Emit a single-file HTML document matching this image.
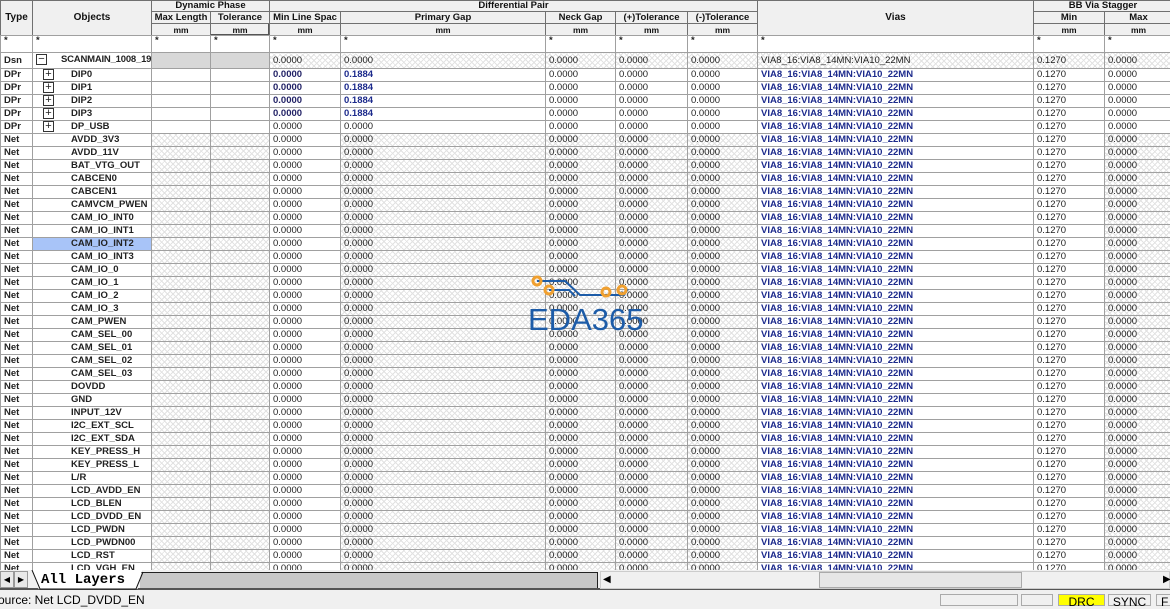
<!DOCTYPE html>
<html><head><meta charset="utf-8"><style>
*{margin:0;padding:0;box-sizing:border-box}
body{width:1170px;height:606px;overflow:hidden;background:#f0f0f0;font-family:"Liberation Sans",Arial,sans-serif;position:relative}
table{border-collapse:collapse;table-layout:fixed;position:absolute;left:0}
td{border:1px solid #a0a0a0;font-size:9.5px;white-space:nowrap;overflow:hidden;padding:0 0 0 3px;line-height:12px;height:13px;color:#222}
.hc{position:absolute;border:1px solid #707070;background:#f0f0f0;font-weight:bold;text-align:center;font-size:9.5px;color:#111;overflow:hidden;white-space:nowrap}
.mm{font-size:8.5px;line-height:12px}
#bd td{background:#fff}
tr.s td{height:17px;line-height:10px;vertical-align:top;font-weight:bold}
tr.d td{height:16px}
tr.d td:nth-child(3),tr.d td:nth-child(4){background:#d8d8d8!important}
tr.d td:nth-child(n+5),tr.n td:nth-child(3),tr.n td:nth-child(4),tr.n td:nth-child(6),tr.n td:nth-child(7),tr.n td:nth-child(8),tr.n td:nth-child(9),tr.n td:nth-child(12){background:repeating-linear-gradient(45deg,#e2e2e2 0 1px,transparent 1px 4px),repeating-linear-gradient(-45deg,#e2e2e2 0 1px,#fff 1px 4px)!important}
td:nth-child(1){font-weight:bold}
td:nth-child(2){font-weight:bold;padding-left:38px}
tr.d td:nth-child(2){padding-left:3px;letter-spacing:-0.2px}
tr.p td:nth-child(2){padding-left:10px}
tr.p td:nth-child(5){color:#222266;font-weight:bold}
tr.p td:nth-child(6),tr.p td:nth-child(10),tr.n td:nth-child(10){color:#1c2a8c;font-weight:bold}
.bx{display:inline-block;width:11px;height:11px;border:1px solid #333;vertical-align:middle;text-align:center;line-height:8px;font-size:11px;font-weight:normal;margin-right:17px;letter-spacing:0}
tr.d .bx{margin-right:14px}
.sel{background:#a8c4f8!important}
</style></head><body>
<div class="hc" style="left:0;top:0;width:33px;height:36px;line-height:33px;font-size:10px">Type</div>
<div class="hc" style="left:32px;top:0;width:120px;height:36px;line-height:33px;font-size:10px">Objects</div>
<div class="hc" style="left:151px;top:0;width:119px;height:12px;line-height:9px">Dynamic Phase</div>
<div class="hc" style="left:269px;top:0;width:489px;height:12px;line-height:9px">Differential Pair</div>
<div class="hc" style="left:757px;top:0;width:277px;height:36px;line-height:33px;font-size:10px">Vias</div>
<div class="hc" style="left:1033px;top:0;width:140px;height:12px;line-height:9px">BB Via Stagger</div>
<div class="hc" style="left:151px;top:11px;width:60px;height:13px;line-height:11px">Max Length</div>
<div class="hc" style="left:210px;top:11px;width:60px;height:13px;line-height:11px">Tolerance</div>
<div class="hc" style="left:269px;top:11px;width:72px;height:13px;line-height:11px">Min Line Spac</div>
<div class="hc" style="left:340px;top:11px;width:206px;height:13px;line-height:11px">Primary Gap</div>
<div class="hc" style="left:545px;top:11px;width:71px;height:13px;line-height:11px">Neck Gap</div>
<div class="hc" style="left:615px;top:11px;width:73px;height:13px;line-height:11px">(+)Tolerance</div>
<div class="hc" style="left:687px;top:11px;width:71px;height:13px;line-height:11px">(-)Tolerance</div>
<div class="hc" style="left:1033px;top:11px;width:72px;height:13px;line-height:11px">Min</div>
<div class="hc" style="left:1104px;top:11px;width:69px;height:13px;line-height:11px">Max</div>
<div class="hc mm" style="left:151px;top:23px;width:60px;height:13px">mm</div>
<div class="hc mm" style="left:210px;top:23px;width:60px;height:13px;box-shadow:inset -1px -1px #555">mm</div>
<div class="hc mm" style="left:269px;top:23px;width:72px;height:13px">mm</div>
<div class="hc mm" style="left:340px;top:23px;width:206px;height:13px">mm</div>
<div class="hc mm" style="left:545px;top:23px;width:71px;height:13px">mm</div>
<div class="hc mm" style="left:615px;top:23px;width:73px;height:13px">mm</div>
<div class="hc mm" style="left:687px;top:23px;width:71px;height:13px">mm</div>
<div class="hc mm" style="left:1033px;top:23px;width:72px;height:13px">mm</div>
<div class="hc mm" style="left:1104px;top:23px;width:69px;height:13px">mm</div>
<div style="position:absolute;top:35px;left:0;width:1170px;height:535px;overflow:hidden">
<table id="bd" style="width:1170px;top:0">
<colgroup><col style="width:32px"><col style="width:119px"><col style="width:59px"><col style="width:59px"><col style="width:71px"><col style="width:205px"><col style="width:70px"><col style="width:72px"><col style="width:70px"><col style="width:276px"><col style="width:71px"><col style="width:66px"></colgroup>
<tr class="s"><td>*</td><td style="padding-left:3px">*</td><td>*</td><td>*</td><td>*</td><td>*</td><td>*</td><td>*</td><td>*</td><td>*</td><td>*</td><td>*</td></tr>
<tr class="d"><td>Dsn</td><td><span class="bx">−</span>SCANMAIN_1008_19</td><td></td><td></td><td>0.0000</td><td>0.0000</td><td>0.0000</td><td>0.0000</td><td>0.0000</td><td>VIA8_16:VIA8_14MN:VIA10_22MN</td><td>0.1270</td><td>0.0000</td></tr>
<tr class="p"><td>DPr</td><td><span class="bx">+</span>DIP0</td><td></td><td></td><td>0.0000</td><td>0.1884</td><td>0.0000</td><td>0.0000</td><td>0.0000</td><td>VIA8_16:VIA8_14MN:VIA10_22MN</td><td>0.1270</td><td>0.0000</td></tr>
<tr class="p"><td>DPr</td><td><span class="bx">+</span>DIP1</td><td></td><td></td><td>0.0000</td><td>0.1884</td><td>0.0000</td><td>0.0000</td><td>0.0000</td><td>VIA8_16:VIA8_14MN:VIA10_22MN</td><td>0.1270</td><td>0.0000</td></tr>
<tr class="p"><td>DPr</td><td><span class="bx">+</span>DIP2</td><td></td><td></td><td>0.0000</td><td>0.1884</td><td>0.0000</td><td>0.0000</td><td>0.0000</td><td>VIA8_16:VIA8_14MN:VIA10_22MN</td><td>0.1270</td><td>0.0000</td></tr>
<tr class="p"><td>DPr</td><td><span class="bx">+</span>DIP3</td><td></td><td></td><td>0.0000</td><td>0.1884</td><td>0.0000</td><td>0.0000</td><td>0.0000</td><td>VIA8_16:VIA8_14MN:VIA10_22MN</td><td>0.1270</td><td>0.0000</td></tr>
<tr class="p"><td>DPr</td><td><span class="bx">+</span>DP_USB</td><td></td><td></td><td style="color:#222;font-weight:normal">0.0000</td><td style="color:#222;font-weight:normal">0.0000</td><td>0.0000</td><td>0.0000</td><td>0.0000</td><td>VIA8_16:VIA8_14MN:VIA10_22MN</td><td>0.1270</td><td>0.0000</td></tr>
<tr class="n"><td>Net</td><td>AVDD_3V3</td><td></td><td></td><td>0.0000</td><td>0.0000</td><td>0.0000</td><td>0.0000</td><td>0.0000</td><td>VIA8_16:VIA8_14MN:VIA10_22MN</td><td>0.1270</td><td>0.0000</td></tr>
<tr class="n"><td>Net</td><td>AVDD_11V</td><td></td><td></td><td>0.0000</td><td>0.0000</td><td>0.0000</td><td>0.0000</td><td>0.0000</td><td>VIA8_16:VIA8_14MN:VIA10_22MN</td><td>0.1270</td><td>0.0000</td></tr>
<tr class="n"><td>Net</td><td>BAT_VTG_OUT</td><td></td><td></td><td>0.0000</td><td>0.0000</td><td>0.0000</td><td>0.0000</td><td>0.0000</td><td>VIA8_16:VIA8_14MN:VIA10_22MN</td><td>0.1270</td><td>0.0000</td></tr>
<tr class="n"><td>Net</td><td>CABCEN0</td><td></td><td></td><td>0.0000</td><td>0.0000</td><td>0.0000</td><td>0.0000</td><td>0.0000</td><td>VIA8_16:VIA8_14MN:VIA10_22MN</td><td>0.1270</td><td>0.0000</td></tr>
<tr class="n"><td>Net</td><td>CABCEN1</td><td></td><td></td><td>0.0000</td><td>0.0000</td><td>0.0000</td><td>0.0000</td><td>0.0000</td><td>VIA8_16:VIA8_14MN:VIA10_22MN</td><td>0.1270</td><td>0.0000</td></tr>
<tr class="n"><td>Net</td><td>CAMVCM_PWEN</td><td></td><td></td><td>0.0000</td><td>0.0000</td><td>0.0000</td><td>0.0000</td><td>0.0000</td><td>VIA8_16:VIA8_14MN:VIA10_22MN</td><td>0.1270</td><td>0.0000</td></tr>
<tr class="n"><td>Net</td><td>CAM_IO_INT0</td><td></td><td></td><td>0.0000</td><td>0.0000</td><td>0.0000</td><td>0.0000</td><td>0.0000</td><td>VIA8_16:VIA8_14MN:VIA10_22MN</td><td>0.1270</td><td>0.0000</td></tr>
<tr class="n"><td>Net</td><td>CAM_IO_INT1</td><td></td><td></td><td>0.0000</td><td>0.0000</td><td>0.0000</td><td>0.0000</td><td>0.0000</td><td>VIA8_16:VIA8_14MN:VIA10_22MN</td><td>0.1270</td><td>0.0000</td></tr>
<tr class="n"><td>Net</td><td class="sel">CAM_IO_INT2</td><td></td><td></td><td>0.0000</td><td>0.0000</td><td>0.0000</td><td>0.0000</td><td>0.0000</td><td>VIA8_16:VIA8_14MN:VIA10_22MN</td><td>0.1270</td><td>0.0000</td></tr>
<tr class="n"><td>Net</td><td>CAM_IO_INT3</td><td></td><td></td><td>0.0000</td><td>0.0000</td><td>0.0000</td><td>0.0000</td><td>0.0000</td><td>VIA8_16:VIA8_14MN:VIA10_22MN</td><td>0.1270</td><td>0.0000</td></tr>
<tr class="n"><td>Net</td><td>CAM_IO_0</td><td></td><td></td><td>0.0000</td><td>0.0000</td><td>0.0000</td><td>0.0000</td><td>0.0000</td><td>VIA8_16:VIA8_14MN:VIA10_22MN</td><td>0.1270</td><td>0.0000</td></tr>
<tr class="n"><td>Net</td><td>CAM_IO_1</td><td></td><td></td><td>0.0000</td><td>0.0000</td><td>0.0000</td><td>0.0000</td><td>0.0000</td><td>VIA8_16:VIA8_14MN:VIA10_22MN</td><td>0.1270</td><td>0.0000</td></tr>
<tr class="n"><td>Net</td><td>CAM_IO_2</td><td></td><td></td><td>0.0000</td><td>0.0000</td><td>0.0000</td><td>0.0000</td><td>0.0000</td><td>VIA8_16:VIA8_14MN:VIA10_22MN</td><td>0.1270</td><td>0.0000</td></tr>
<tr class="n"><td>Net</td><td>CAM_IO_3</td><td></td><td></td><td>0.0000</td><td>0.0000</td><td>0.0000</td><td>0.0000</td><td>0.0000</td><td>VIA8_16:VIA8_14MN:VIA10_22MN</td><td>0.1270</td><td>0.0000</td></tr>
<tr class="n"><td>Net</td><td>CAM_PWEN</td><td></td><td></td><td>0.0000</td><td>0.0000</td><td>0.0000</td><td>0.0000</td><td>0.0000</td><td>VIA8_16:VIA8_14MN:VIA10_22MN</td><td>0.1270</td><td>0.0000</td></tr>
<tr class="n"><td>Net</td><td>CAM_SEL_00</td><td></td><td></td><td>0.0000</td><td>0.0000</td><td>0.0000</td><td>0.0000</td><td>0.0000</td><td>VIA8_16:VIA8_14MN:VIA10_22MN</td><td>0.1270</td><td>0.0000</td></tr>
<tr class="n"><td>Net</td><td>CAM_SEL_01</td><td></td><td></td><td>0.0000</td><td>0.0000</td><td>0.0000</td><td>0.0000</td><td>0.0000</td><td>VIA8_16:VIA8_14MN:VIA10_22MN</td><td>0.1270</td><td>0.0000</td></tr>
<tr class="n"><td>Net</td><td>CAM_SEL_02</td><td></td><td></td><td>0.0000</td><td>0.0000</td><td>0.0000</td><td>0.0000</td><td>0.0000</td><td>VIA8_16:VIA8_14MN:VIA10_22MN</td><td>0.1270</td><td>0.0000</td></tr>
<tr class="n"><td>Net</td><td>CAM_SEL_03</td><td></td><td></td><td>0.0000</td><td>0.0000</td><td>0.0000</td><td>0.0000</td><td>0.0000</td><td>VIA8_16:VIA8_14MN:VIA10_22MN</td><td>0.1270</td><td>0.0000</td></tr>
<tr class="n"><td>Net</td><td>DOVDD</td><td></td><td></td><td>0.0000</td><td>0.0000</td><td>0.0000</td><td>0.0000</td><td>0.0000</td><td>VIA8_16:VIA8_14MN:VIA10_22MN</td><td>0.1270</td><td>0.0000</td></tr>
<tr class="n"><td>Net</td><td>GND</td><td></td><td></td><td>0.0000</td><td>0.0000</td><td>0.0000</td><td>0.0000</td><td>0.0000</td><td>VIA8_16:VIA8_14MN:VIA10_22MN</td><td>0.1270</td><td>0.0000</td></tr>
<tr class="n"><td>Net</td><td>INPUT_12V</td><td></td><td></td><td>0.0000</td><td>0.0000</td><td>0.0000</td><td>0.0000</td><td>0.0000</td><td>VIA8_16:VIA8_14MN:VIA10_22MN</td><td>0.1270</td><td>0.0000</td></tr>
<tr class="n"><td>Net</td><td>I2C_EXT_SCL</td><td></td><td></td><td>0.0000</td><td>0.0000</td><td>0.0000</td><td>0.0000</td><td>0.0000</td><td>VIA8_16:VIA8_14MN:VIA10_22MN</td><td>0.1270</td><td>0.0000</td></tr>
<tr class="n"><td>Net</td><td>I2C_EXT_SDA</td><td></td><td></td><td>0.0000</td><td>0.0000</td><td>0.0000</td><td>0.0000</td><td>0.0000</td><td>VIA8_16:VIA8_14MN:VIA10_22MN</td><td>0.1270</td><td>0.0000</td></tr>
<tr class="n"><td>Net</td><td>KEY_PRESS_H</td><td></td><td></td><td>0.0000</td><td>0.0000</td><td>0.0000</td><td>0.0000</td><td>0.0000</td><td>VIA8_16:VIA8_14MN:VIA10_22MN</td><td>0.1270</td><td>0.0000</td></tr>
<tr class="n"><td>Net</td><td>KEY_PRESS_L</td><td></td><td></td><td>0.0000</td><td>0.0000</td><td>0.0000</td><td>0.0000</td><td>0.0000</td><td>VIA8_16:VIA8_14MN:VIA10_22MN</td><td>0.1270</td><td>0.0000</td></tr>
<tr class="n"><td>Net</td><td>L/R</td><td></td><td></td><td>0.0000</td><td>0.0000</td><td>0.0000</td><td>0.0000</td><td>0.0000</td><td>VIA8_16:VIA8_14MN:VIA10_22MN</td><td>0.1270</td><td>0.0000</td></tr>
<tr class="n"><td>Net</td><td>LCD_AVDD_EN</td><td></td><td></td><td>0.0000</td><td>0.0000</td><td>0.0000</td><td>0.0000</td><td>0.0000</td><td>VIA8_16:VIA8_14MN:VIA10_22MN</td><td>0.1270</td><td>0.0000</td></tr>
<tr class="n"><td>Net</td><td>LCD_BLEN</td><td></td><td></td><td>0.0000</td><td>0.0000</td><td>0.0000</td><td>0.0000</td><td>0.0000</td><td>VIA8_16:VIA8_14MN:VIA10_22MN</td><td>0.1270</td><td>0.0000</td></tr>
<tr class="n"><td>Net</td><td>LCD_DVDD_EN</td><td></td><td></td><td>0.0000</td><td>0.0000</td><td>0.0000</td><td>0.0000</td><td>0.0000</td><td>VIA8_16:VIA8_14MN:VIA10_22MN</td><td>0.1270</td><td>0.0000</td></tr>
<tr class="n"><td>Net</td><td>LCD_PWDN</td><td></td><td></td><td>0.0000</td><td>0.0000</td><td>0.0000</td><td>0.0000</td><td>0.0000</td><td>VIA8_16:VIA8_14MN:VIA10_22MN</td><td>0.1270</td><td>0.0000</td></tr>
<tr class="n"><td>Net</td><td>LCD_PWDN00</td><td></td><td></td><td>0.0000</td><td>0.0000</td><td>0.0000</td><td>0.0000</td><td>0.0000</td><td>VIA8_16:VIA8_14MN:VIA10_22MN</td><td>0.1270</td><td>0.0000</td></tr>
<tr class="n"><td>Net</td><td>LCD_RST</td><td></td><td></td><td>0.0000</td><td>0.0000</td><td>0.0000</td><td>0.0000</td><td>0.0000</td><td>VIA8_16:VIA8_14MN:VIA10_22MN</td><td>0.1270</td><td>0.0000</td></tr>
<tr class="n"><td>Net</td><td>LCD_VGH_EN</td><td></td><td></td><td>0.0000</td><td>0.0000</td><td>0.0000</td><td>0.0000</td><td>0.0000</td><td>VIA8_16:VIA8_14MN:VIA10_22MN</td><td>0.1270</td><td>0.0000</td></tr>
</table>
</div>
<svg style="position:absolute;left:525px;top:272px" width="120" height="64">
<g fill="none" stroke="#1d5ca8" stroke-width="2"><path d="M12 9 H40 L55 23 H99 L103 17"/><path d="M24 18 H44 L50 24"/></g>
<g fill="none" stroke="#f0a030" stroke-width="3"><circle cx="12" cy="9" r="4"/><circle cx="24" cy="18" r="4"/><circle cx="81" cy="20" r="4"/><circle cx="97" cy="18" r="4"/></g>
<text x="3" y="58" font-family="Liberation Sans,sans-serif" font-size="31" fill="#1d5ca8">EDA365</text>
</svg>
<div style="position:absolute;top:570px;left:0;width:1170px;height:20px;background:#f0f0f0;border-bottom:2px solid #555"></div>
<div style="position:absolute;top:571px;left:0;width:14px;height:17px;border:1px solid #999;background:#e8e8e8;font-size:8px;line-height:15px;text-align:center">◀</div>
<div style="position:absolute;top:571px;left:14px;width:14px;height:17px;border:1px solid #999;background:#e8e8e8;font-size:8px;line-height:15px;text-align:center">▶</div>
<div style="position:absolute;top:572px;left:140px;width:458px;height:16px;background:#c8c8c8;border-top:1px solid #222;border-right:1px solid #222"></div>
<div style="position:absolute;top:570px;left:32px;width:110px;height:19px;background:#fff;clip-path:polygon(0 0,100% 0,96% 100%,6% 100%);"></div>
<svg style="position:absolute;top:570px;left:30px" width="116" height="20"><path d="M2 0 L10 19 H106 L113 2" fill="none" stroke="#111"/></svg>
<div style="position:absolute;top:571px;left:41px;font-family:'Liberation Mono',monospace;font-size:14px;font-weight:bold;line-height:18px">All Layers</div>
<div style="position:absolute;top:571px;left:600px;width:570px;height:18px;background:#f0f0f0;border:1px solid #ccc"></div>
<div style="position:absolute;top:572px;left:603px;font-size:10px;line-height:16px">◀</div>
<div style="position:absolute;top:572px;left:819px;width:203px;height:16px;background:#e6e6e6;border:1px solid #aaa"></div>
<div style="position:absolute;top:572px;left:1163px;font-size:10px;line-height:16px">▶</div>
<div style="position:absolute;top:592px;left:0;width:1170px;height:14px;background:#f0f0f0"></div>
<div style="position:absolute;top:593px;left:-2px;font-size:12px;line-height:14px">ource: Net LCD_DVDD_EN</div>
<div style="position:absolute;top:594px;left:940px;width:78px;height:12px;border:1px solid #aaa"></div>
<div style="position:absolute;top:594px;left:1021px;width:32px;height:12px;border:1px solid #aaa"></div>
<div style="position:absolute;top:594px;left:1058px;width:47px;height:12px;background:#ffff00;border:1px solid #aaa;font-size:12px;text-align:center;line-height:14px">DRC</div>
<div style="position:absolute;top:594px;left:1108px;width:43px;height:12px;border:1px solid #aaa;font-size:12px;text-align:center;line-height:14px">SYNC</div>
<div style="position:absolute;top:594px;left:1156px;width:20px;height:12px;border:1px solid #aaa;font-size:12px;padding-left:4px;line-height:14px">F</div>
</body></html>
